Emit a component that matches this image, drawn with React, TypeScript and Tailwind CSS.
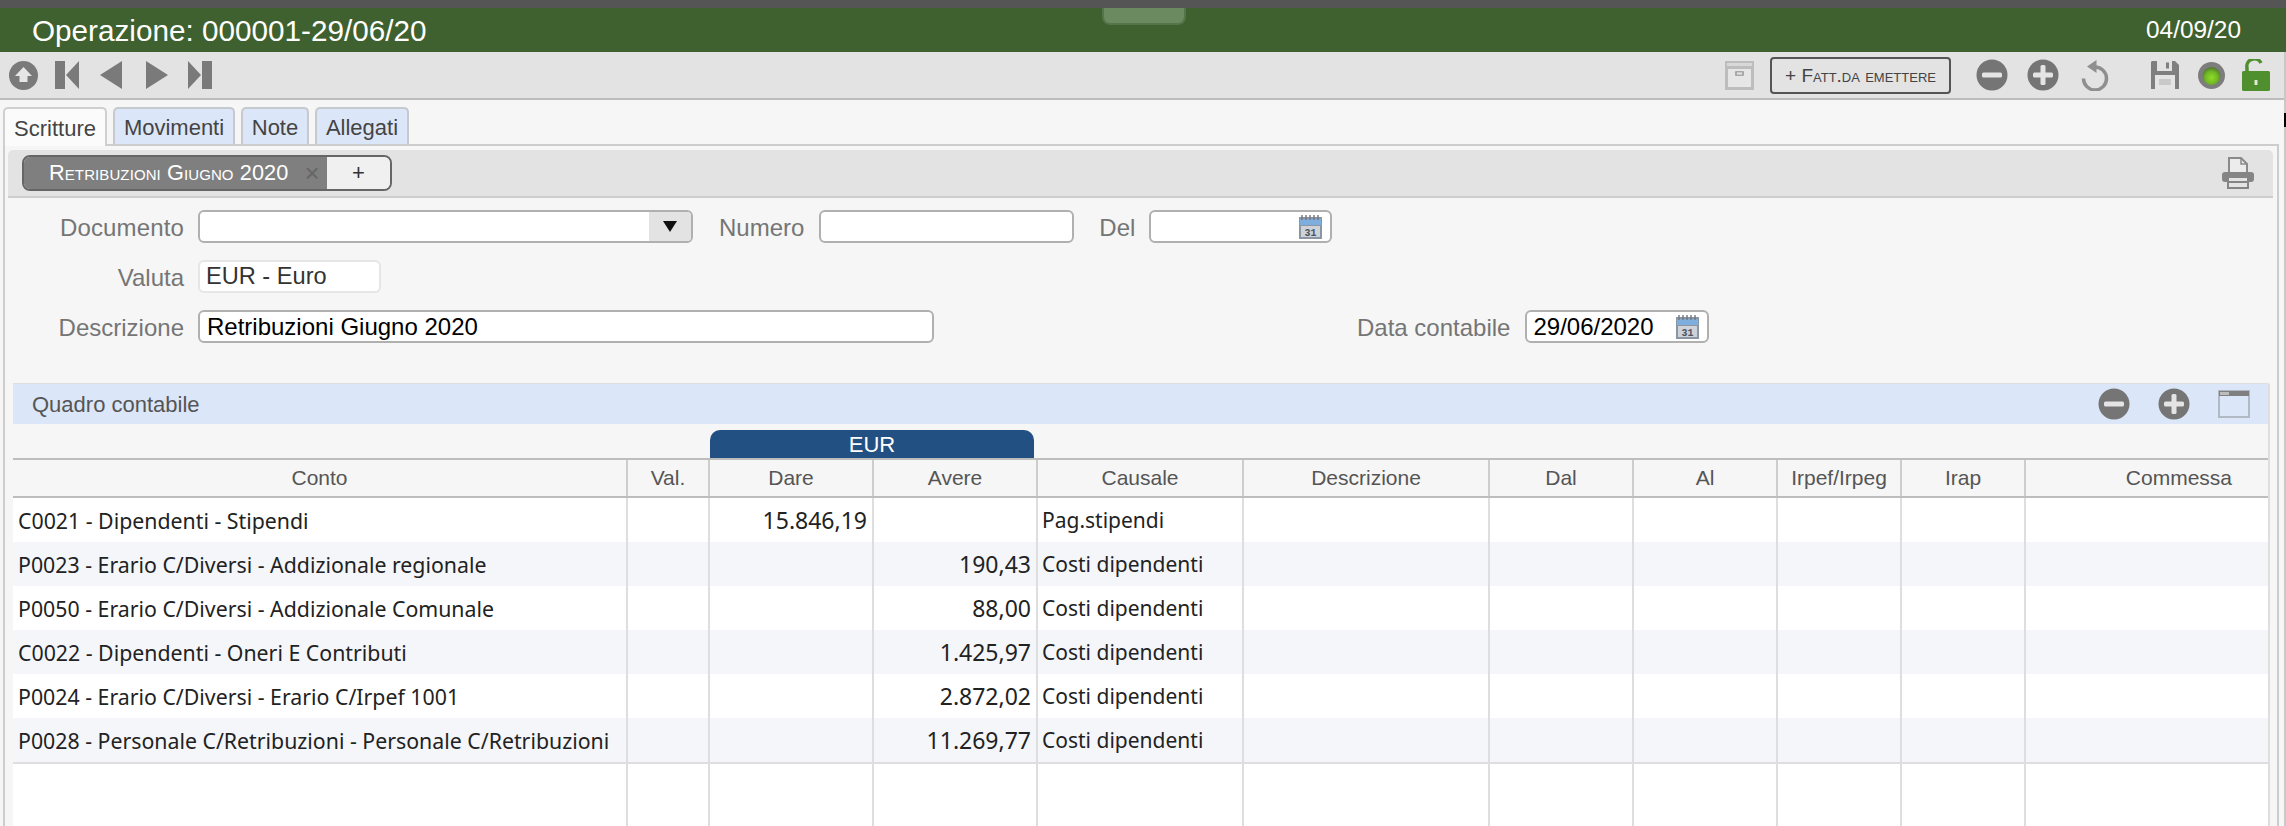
import React from "react";

const sans = "font-['Liberation_Sans',Arial,sans-serif]";

function CircleBtn({ kind, size = 32 }: { kind: "minus" | "plus"; size?: number }) {
  return (
    <svg width={size} height={size} viewBox="0 0 32 32" className="block shrink-0">
      <circle cx="16" cy="16" r="15.5" fill="#757575" />
      <rect x="6" y="13.5" width="20" height="5" rx="1.5" fill="#e4e4e4" />
      {kind === "plus" && <rect x="13.5" y="6" width="5" height="20" rx="1.5" fill="#e4e4e4" />}
    </svg>
  );
}

function UpIcon() {
  return (
    <svg width="29" height="29" viewBox="0 0 29 29" className="block shrink-0">
      <circle cx="14.5" cy="14.5" r="14.5" fill="#7a7a7a" />
      <path d="M14.5 6 L23 15 H18.5 V21 H10.5 V15 H6 Z" fill="#e6e6e6" />
    </svg>
  );
}

function Nav({ kind }: { kind: "first" | "prev" | "next" | "last" }) {
  const paths = {
    first: { w: 24, d: "M0 0 H10 V28 H0 Z M24 0 V28 L11 14 Z" },
    prev: { w: 22, d: "M22 0 V28 L0 14 Z" },
    next: { w: 22, d: "M0 0 V28 L22 14 Z" },
    last: { w: 24, d: "M14 0 H24 V28 H14 Z M0 0 V28 L13 14 Z" },
  }[kind];
  return (
    <svg width={paths.w} height="28" viewBox={`0 0 ${paths.w} 28`} className="block shrink-0">
      <path d={paths.d} fill="#7a7a7a" />
    </svg>
  );
}

function ArchiveIcon() {
  return (
    <svg width="29" height="29" viewBox="0 0 29 29" className="block shrink-0">
      <rect x="0" y="0" width="29" height="29" fill="#bdbdbd" />
      <rect x="2" y="2" width="25" height="3" fill="#d8d8d8" />
      <rect x="3" y="8" width="23" height="18" fill="#e6e6e6" />
      <rect x="10" y="10" width="9" height="5" rx="1" fill="#a8a8a8" />
      <rect x="12" y="11.5" width="5" height="2" fill="#e6e6e6" />
    </svg>
  );
}

function ResetIcon() {
  return (
    <svg width="28" height="31" viewBox="0 0 28 31" className="block shrink-0">
      <path d="M14 7 A11.5 11.5 0 1 1 2.5 18.5" fill="none" stroke="#8f8f8f" strokeWidth="3.5" />
      <path d="M15.5 0 V13 L6 6.5 Z" fill="#8f8f8f" />
    </svg>
  );
}

function SaveIcon() {
  return (
    <svg width="28" height="28" viewBox="0 0 28 28" className="block shrink-0">
      <path d="M1 0 H24 L28 4 V28 H0 V1 Z" fill="#7f7f7f" />
      <rect x="6" y="0" width="15" height="10" fill="#e2e2e2" />
      <rect x="15" y="1.5" width="3" height="6" fill="#7f7f7f" />
      <rect x="4" y="14" width="20" height="14" fill="#e4e4e4" />
      <rect x="8" y="18" width="12" height="6" fill="#c9c9c9" />
    </svg>
  );
}

function LedIcon() {
  return (
    <svg width="27" height="27" viewBox="0 0 27 27" className="block shrink-0">
      <defs>
        <radialGradient id="led" cx="50%" cy="60%" r="55%">
          <stop offset="0%" stopColor="#8fdc28" />
          <stop offset="65%" stopColor="#6fb524" />
          <stop offset="100%" stopColor="#55802f" />
        </radialGradient>
      </defs>
      <circle cx="13.5" cy="13.5" r="13.5" fill="#7d7d7d" />
      <circle cx="13.5" cy="14" r="9" fill="url(#led)" />
    </svg>
  );
}

function LockIcon() {
  return (
    <svg width="28" height="32" viewBox="0 0 28 32" className="block shrink-0">
      <path d="M5 13 V9 A7.5 7.5 0 0 1 19 4" fill="none" stroke="#4f8f2d" strokeWidth="3.5" />
      <rect x="0" y="12" width="28" height="20" rx="1.5" fill="#4f8f2d" />
      <rect x="12.5" y="21" width="3" height="5" fill="#dfe9d6" />
    </svg>
  );
}

function PrintIcon() {
  return (
    <svg width="32" height="32" viewBox="0 0 32 32" className="block shrink-0">
      <path d="M7 15 V1 H19 L25 7 V15" fill="#ececec" stroke="#8a8a8a" strokeWidth="2" />
      <path d="M19 1 V7 H25" fill="none" stroke="#8a8a8a" strokeWidth="1.5" />
      <rect x="0" y="15" width="32" height="10" rx="3" fill="#858585" />
      <rect x="6" y="20" width="20" height="11" fill="#e4e4e4" stroke="#858585" strokeWidth="2" />
      <rect x="6" y="24" width="20" height="2" fill="#858585" />
    </svg>
  );
}

function CalendarIcon() {
  return (
    <svg width="23" height="24" viewBox="0 0 23 24" className="block shrink-0">
      <rect x="0" y="2" width="23" height="22" fill="#8c96a2" />
      <rect x="1" y="4" width="21" height="6" fill="#7daede" />
      <path d="M3 0 V5 M7 0 V5 M11 0 V5 M15 0 V5 M19 0 V5" stroke="#6f7680" strokeWidth="1.4" />
      <rect x="2" y="11" width="19" height="11" fill="#ced3d9" />
      <text x="11.5" y="20.5" textAnchor="middle" fontSize="10" fontWeight="700" fontFamily="'Liberation Mono', monospace" fill="#4d5560">
        31
      </text>
    </svg>
  );
}

function WindowIcon() {
  return (
    <svg width="32" height="28" viewBox="0 0 32 28" className="block shrink-0">
      <rect x="1" y="1" width="30" height="26" fill="#dbe6f8" stroke="#b1b9c5" strokeWidth="2" />
      <rect x="1" y="1" width="30" height="5" fill="#7f7f7f" />
      <rect x="2" y="2" width="9" height="3" fill="#bdbdbd" />
    </svg>
  );
}

const inputBox = "h-[33px] border-2 border-[#b0b0b0] rounded-[6px] bg-white";
const labelCls = "block pt-[3px] text-[24px] text-[#757575] leading-none";

const cols = "grid grid-cols-[615px_82px_164px_164px_206px_246px_144px_144px_124px_124px_242px]";

const headers: { t: string; cls?: string }[] = [
  { t: "Conto" },
  { t: "Val." },
  { t: "Dare" },
  { t: "Avere" },
  { t: "Causale" },
  { t: "Descrizione" },
  { t: "Dal" },
  { t: "Al" },
  { t: "Irpef/Irpeg" },
  { t: "Irap" },
  { t: "Commessa", cls: "justify-end pr-[36px]" },
];

const rows = [
  ["C0021 - Dipendenti - Stipendi", "15.846,19", "", "Pag.stipendi"],
  ["P0023 - Erario C/Diversi - Addizionale regionale", "", "190,43", "Costi dipendenti"],
  ["P0050 - Erario C/Diversi - Addizionale Comunale", "", "88,00", "Costi dipendenti"],
  ["C0022 - Dipendenti - Oneri E Contributi", "", "1.425,97", "Costi dipendenti"],
  ["P0024 - Erario C/Diversi - Erario C/Irpef 1001", "", "2.872,02", "Costi dipendenti"],
  ["P0028 - Personale C/Retribuzioni - Personale C/Retribuzioni", "", "11.269,77", "Costi dipendenti"],
];

const cellFont = "font-['Noto_Sans',sans-serif] text-[21.3px] text-[#222]";
const numFont = "text-[23px]";
const vline = "border-r-2 border-[#dedede]";

export default function App() {
  return (
    <div className={`${sans} relative w-[2286px] h-[826px] overflow-hidden bg-[#f6f6f6]`}>
      <div className="h-[8px] bg-[#555555]" />
      <div className="relative h-[44px] bg-[#3f612f] flex items-center justify-between pl-[32px] pr-[45px] text-white">
        <span className="pt-[2px] text-[29.7px] leading-none">Operazione: 000001-29/06/20</span>
        <span className="text-[24.4px] leading-none">04/09/20</span>
        <div className="absolute left-[1102px] top-0 w-[84px] h-[17px] bg-[#6b8a5f] border-x-2 border-b-2 border-[#54744a] rounded-b-[8px]" />
      </div>

      <div className="h-[48px] w-[2284px] bg-[#e3e3e3] border-b-2 border-[#bdbdbd] flex items-center justify-between pl-[9px] pr-[14px]">
        <div className="flex items-center">
          <UpIcon />
          <div className="ml-[17px]"><Nav kind="first" /></div>
          <div className="ml-[21px]"><Nav kind="prev" /></div>
          <div className="ml-[24px]"><Nav kind="next" /></div>
          <div className="ml-[20px]"><Nav kind="last" /></div>
        </div>
        <div className="flex items-center">
          <ArchiveIcon />
          <div className="ml-[16px] w-[181px] h-[37px] border-2 border-[#555] rounded-[4px] flex items-center justify-center text-[19px] text-[#444] [font-variant:small-caps] leading-none">
            + Fatt.da emettere
          </div>
          <div className="ml-[25px]"><CircleBtn kind="minus" /></div>
          <div className="ml-[19px]"><CircleBtn kind="plus" /></div>
          <div className="ml-[22px]"><ResetIcon /></div>
          <div className="ml-[42px]"><SaveIcon /></div>
          <div className="ml-[19px]"><LedIcon /></div>
          <div className="ml-[17px]"><LockIcon /></div>
        </div>
      </div>

      <div className="relative z-10 flex h-[46px] pt-[7px] pl-[3px] -mb-[2px] text-[22px] leading-none text-[#444]">
        <div className="w-[104px] h-[39px] pt-[2px] bg-[#fbfbfb] border-2 border-b-0 border-[#cfcfcf] rounded-t-[5px] flex items-center justify-center">Scritture</div>
        <div className="ml-[6px] w-[122px] h-[37px] pt-[2px] bg-[#dbe6f8] border-2 border-b-0 border-[#c6c9ce] rounded-t-[5px] flex items-center justify-center">Movimenti</div>
        <div className="ml-[6px] w-[68px] h-[37px] pt-[2px] bg-[#dbe6f8] border-2 border-b-0 border-[#c6c9ce] rounded-t-[5px] flex items-center justify-center">Note</div>
        <div className="ml-[6px] w-[94px] h-[37px] pt-[2px] bg-[#dbe6f8] border-2 border-b-0 border-[#c6c9ce] rounded-t-[5px] flex items-center justify-center">Allegati</div>
      </div>

      <div className="ml-[3px] w-[2276px] h-[682px] border-x-2 border-t-2 border-[#cdcdcd] pt-[4px] pl-[3px] pr-[4px]">
        <div className="h-[48px] bg-[#e3e3e3] border-b-2 border-[#cdcdcd] rounded-t-[5px] flex items-center justify-between pl-[14px] pr-[19px]">
          <div className="flex h-[36px] w-[370px] border-2 border-[#666] rounded-[8px] overflow-hidden">
            <div className="w-[303px] bg-[#7f7f7f] flex items-center pl-[25px] text-[21.7px] tracking-[0.1px] text-white [font-variant:small-caps] leading-none whitespace-nowrap">
              Retribuzioni Giugno 2020
              <span className="ml-[16px] text-[26px] text-[#666] font-normal">×</span>
            </div>
            <div className="flex-1 bg-[#f0f0f0] flex items-center justify-center text-[22px] text-[#333] leading-none">+</div>
          </div>
          <PrintIcon />
        </div>

        <div className="flex items-center h-[33px] mt-[12px]">
          <div className="w-[176px] text-right"><span className={`${labelCls} tracking-[0.15px]`}>Documento</span></div>
          <div className={`ml-[14px] w-[495px] ${inputBox} flex justify-end overflow-hidden`}>
            <div className="w-[42px] bg-[#e3e3e3] flex items-center justify-center">
              <svg width="14" height="11" viewBox="0 0 14 11"><path d="M0 0 H14 L7 11 Z" fill="#111" /></svg>
            </div>
          </div>
          <span className={`${labelCls} ml-[26px]`}>Numero</span>
          <div className={`ml-[15px] w-[255px] ${inputBox}`} />
          <span className={`${labelCls} ml-[25px]`}>Del</span>
          <div className={`ml-[14px] w-[183px] ${inputBox} flex items-center justify-end pr-[8px]`}>
            <CalendarIcon />
          </div>
        </div>

        <div className="flex items-center h-[33px] mt-[17px]">
          <div className="w-[176px] text-right"><span className={labelCls}>Valuta</span></div>
          <div className="ml-[14px] w-[183px] h-[33px] border-2 border-[#e6e6e6] rounded-[6px] bg-white flex items-center pl-[6px] pt-[1px] text-[23.6px] text-[#333] leading-none">
            EUR - Euro
          </div>
        </div>

        <div className="flex items-center h-[33px] mt-[17px]">
          <div className="w-[176px] text-right"><span className={labelCls}>Descrizione</span></div>
          <div className={`ml-[14px] w-[736px] ${inputBox} flex items-center pl-[7px] pt-[1px] text-[24px] text-black leading-none`}>
            Retribuzioni Giugno 2020
          </div>
          <span className={`${labelCls} ml-[423px]`}>Data contabile</span>
          <div className={`ml-[15px] w-[184px] ${inputBox} flex items-center justify-between pl-[6px] pr-[8px] text-[24px] text-black leading-none`}>
            <span className="pt-[1px]">29/06/2020</span>
            <CalendarIcon />
          </div>
        </div>

        <div className="mt-[40px] ml-[5px] w-[2257px] border-t border-r-2 border-[#dedede] rounded-tr-[3px]">
          <div className="h-[40px] bg-[#dbe6f8] flex items-center justify-between pl-[19px] pr-[18px]">
            <span className="pt-[1px] text-[22px] text-[#555] leading-none">Quadro contabile</span>
            <div className="flex items-center">
              <CircleBtn kind="minus" />
              <div className="ml-[28px]"><CircleBtn kind="plus" /></div>
              <div className="ml-[28px]"><WindowIcon /></div>
            </div>
          </div>
          <div className="h-[34px] pt-[6px] pl-[697px]">
            <div className="w-[324px] h-[28px] pt-[1px] bg-[#235082] rounded-t-[10px] flex items-center justify-center text-white text-[22px] leading-none">EUR</div>
          </div>
          <div className={`${cols} h-[40px] border-y-2 border-[#bdbdbd] text-[21px] text-[#555] leading-none`}>
            {headers.map((h, i) => (
              <div key={h.t} className={`flex items-center pb-[2px] ${h.cls ?? "justify-center"} ${i < 10 ? "border-r-2 border-[#cdcdcd]" : ""}`}>
                {h.t}
              </div>
            ))}
          </div>
          {rows.map((r, idx) => (
            <div key={r[0]} className={`${cols} h-[44px] ${idx % 2 ? "bg-[#f4f6fa]" : "bg-white"} ${cellFont} leading-none`}>
              <div className={`flex items-center pl-[5px] pt-[1px] whitespace-nowrap ${vline}`}>{r[0]}</div>
              <div className={vline} />
              <div className={`flex items-center justify-end pr-[5px] pt-[1px] ${numFont} ${vline}`}>{r[1]}</div>
              <div className={`flex items-center justify-end pr-[5px] pt-[1px] ${numFont} ${vline}`}>{r[2]}</div>
              <div className={`flex items-center pl-[4px] pt-[1px] text-[21px] whitespace-nowrap ${vline}`}>{r[3]}</div>
              <div className={vline} />
              <div className={vline} />
              <div className={vline} />
              <div className={vline} />
              <div className={vline} />
              <div />
            </div>
          ))}
          <div className={`${cols} h-[64px] bg-white border-t-2 border-[#dedede]`}>
            {headers.map((h, i) => (
              <div key={h.t} className={i < 10 ? vline : ""} />
            ))}
          </div>
        </div>
      </div>

      <div className="absolute right-0 top-[52px] bottom-0 w-[2px] bg-[#c9c9c9]" />
      <div className="absolute right-0 top-[113px] h-[14px] w-[2px] bg-black" />
    </div>
  );
}
